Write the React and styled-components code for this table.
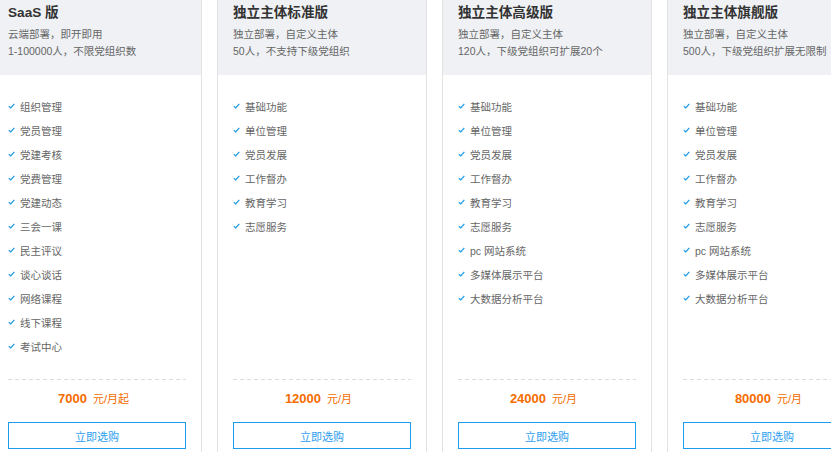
import styled, { createGlobalStyle } from 'styled-components';

const GlobalStyle = createGlobalStyle`
  body {
    margin: 0;
    background: #ffffff;
    font-family: "Liberation Sans", "Noto Sans CJK SC", sans-serif;
    overflow: hidden;
  }
`;

const Container = styled.section`
  display: flex;
  gap: 15px;
  margin: -12px 0 0 -8px;
  width: 920px;
`;

const Card = styled.div`
  flex: 0 0 210px;
  width: 210px;
  min-width: 0;
  box-sizing: border-box;
  border: 1px solid #e3e3e3;
  background: #fff;
  height: 490px;
`;

const Header = styled.div`
  background: #eff1f5;
  padding: 14px 15px 15px;
`;

const Title = styled.h3`
  margin: 0;
  font-size: 13.6px;
  line-height: 20px;
  font-weight: bold;
  color: #333;
  white-space: nowrap;
`;

const Sub = styled.p`
  margin: 3px 0 0;
  font-size: 10.5px;
  line-height: 17px;
  color: #666;
  white-space: nowrap;
`;

const Features = styled.ul`
  list-style: none;
  margin: 0 15px;
  padding: 19px 0 0;
  height: 285px;
  box-sizing: content-box;
`;

const Item = styled.li`
  display: flex;
  align-items: center;
  gap: 5px;
  height: 24px;
  font-size: 10.5px;
  color: #666;
  white-space: nowrap;
`;

const Divider = styled.div`
  margin: 0 15px;
  height: 1px;
  background: repeating-linear-gradient(90deg, #dcdcdc 0 4px, transparent 4px 7px);
`;

const Price = styled.div`
  text-align: center;
  padding: 9px 7px 0 0;
  line-height: 20px;
  color: #f56c00;
  font-size: 11px;

  strong {
    font-size: 13px;
    margin-right: 6px;
  }
`;

const BuyButton = styled.button`
  display: block;
  box-sizing: border-box;
  margin: 13px 15px 0;
  width: 178px;
  height: 27px;
  background: #fff;
  border: 1px solid #1c9cec;
  color: #2c9ef0;
  font-family: inherit;
  font-size: 11px;
  cursor: pointer;
`;

const Check = () => (
  <svg width="7" height="6" viewBox="0 0 7 6">
    <path d="M0.8 3.2 L2.8 5 L6.3 0.9" fill="none" stroke="#1a9be6" strokeWidth="1.2" />
  </svg>
);

const base = ['基础功能', '单位管理', '党员发展', '工作督办', '教育学习', '志愿服务'];
const pro = [...base, 'pc 网站系统', '多媒体展示平台', '大数据分析平台'];

const plans = [
  {
    title: 'SaaS 版',
    lines: ['云端部署，即开即用', '1-100000人，不限党组织数'],
    features: ['组织管理', '党员管理', '党建考核', '党费管理', '党建动态', '三会一课', '民主评议', '谈心谈话', '网络课程', '线下课程', '考试中心'],
    price: '7000',
    unit: '元/月起',
  },
  {
    title: '独立主体标准版',
    lines: ['独立部署，自定义主体', '50人，不支持下级党组织'],
    features: base,
    price: '12000',
    unit: '元/月',
  },
  {
    title: '独立主体高级版',
    lines: ['独立部署，自定义主体', '120人，下级党组织可扩展20个'],
    features: pro,
    price: '24000',
    unit: '元/月',
  },
  {
    title: '独立主体旗舰版',
    lines: ['独立部署，自定义主体', '500人，下级党组织扩展无限制'],
    features: pro,
    price: '80000',
    unit: '元/月',
  },
];

export default function App() {
  return (
    <>
      <GlobalStyle />
      <Container>
        {plans.map((p) => (
          <Card key={p.title}>
            <Header>
              <Title>{p.title}</Title>
              <Sub>
                {p.lines[0]}
                <br />
                {p.lines[1]}
              </Sub>
            </Header>
            <Features>
              {p.features.map((f) => (
                <Item key={f}>
                  <Check />
                  {f}
                </Item>
              ))}
            </Features>
            <Divider />
            <Price>
              <strong>{p.price}</strong>
              {p.unit}
            </Price>
            <BuyButton>立即选购</BuyButton>
          </Card>
        ))}
      </Container>
    </>
  );
}
